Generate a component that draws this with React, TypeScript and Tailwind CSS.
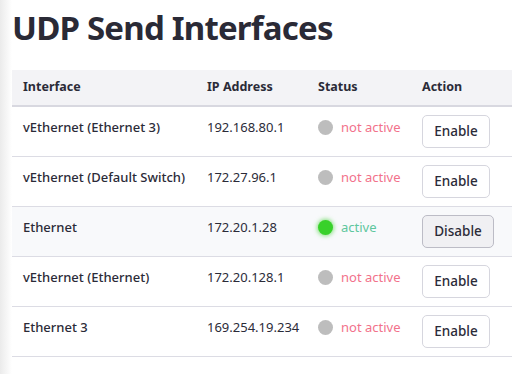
const rows = [
  { name: 'vEthernet (Ethernet 3)', ip: '192.168.80.1', active: false },
  { name: 'vEthernet (Default Switch)', ip: '172.27.96.1', active: false },
  { name: 'Ethernet', ip: '172.20.1.28', active: true },
  { name: 'vEthernet (Ethernet)', ip: '172.20.128.1', active: false },
  { name: 'Ethernet 3', ip: '169.254.19.234', active: false },
];

function StatusCell({ active }: { active: boolean }) {
  return (
    <div className="flex items-center gap-[8px] h-6">
      <span
        className={`inline-block w-[15px] h-[15px] shrink-0 rounded-full ${
          active ? 'bg-[#38d12a] shadow-[0_0_4px_1px_rgba(56,209,42,0.6)]' : 'bg-[#bdbdbd]'
        }`}
      />
      <span className={active ? 'text-[#5ec79e]' : 'text-[#f2728b]'}>{active ? 'active' : 'not active'}</span>
    </div>
  );
}

export default function App() {
  return (
    <div
      className="flex w-[529px] h-[374px] bg-white text-[#2b2b38] overflow-hidden"
      style={{ fontFamily: '"Noto Sans", "Open Sans", sans-serif' }}
    >
      <div className="w-3 shrink-0 bg-gradient-to-r from-[#ebebeb] to-white" />
      <div className="w-[500px]">
        <h1 className="mt-2 mb-[22px] text-[33px] leading-[40px] font-bold tracking-[-0.8px] text-[#2a2a36]">
          UDP Send Interfaces
        </h1>
        <table className="w-[500px] table-fixed border-collapse text-[13px]">
          <colgroup>
            <col className="w-[184px]" />
            <col className="w-[111px]" />
            <col className="w-[104px]" />
            <col className="w-[101px]" />
          </colgroup>
          <thead>
            <tr className="bg-[#f3f3f6] border-b-2 border-[#d8d8e0]">
              <th className="h-[36px] pl-[11px] text-left font-bold text-[12.5px]">Interface</th>
              <th className="pl-[11px] text-left font-bold text-[12.5px]">IP Address</th>
              <th className="pl-[11px] text-left font-bold text-[12.5px]">Status</th>
              <th className="pl-[11px] text-left font-bold text-[12.5px]">Action</th>
            </tr>
          </thead>
          <tbody>
            {rows.map((r) => (
              <tr key={r.name} className={`border-b border-[#dcdce4] ${r.active ? 'bg-[#f8f9fb]' : ''}`}>
                <td className="align-top pl-[11px] py-2 leading-6 font-medium whitespace-nowrap">{r.name}</td>
                <td className="align-top pl-[11px] py-2 leading-6">{r.ip}</td>
                <td className="align-top pl-[11px] py-2 leading-6">
                  <StatusCell active={r.active} />
                </td>
                <td className="align-top pl-[11px] py-2">
                  <button
                    type="button"
                    className={`block h-[33px] rounded-[5px] border text-[13.5px] font-medium ${
                      r.active
                        ? 'w-[72px] bg-[#f0f0f3] border-[#bcbcc6]'
                        : 'w-[68px] bg-white border-[#d6d6de]'
                    }`}
                  >
                    {r.active ? 'Disable' : 'Enable'}
                  </button>
                </td>
              </tr>
            ))}
          </tbody>
        </table>
      </div>
    </div>
  );
}
